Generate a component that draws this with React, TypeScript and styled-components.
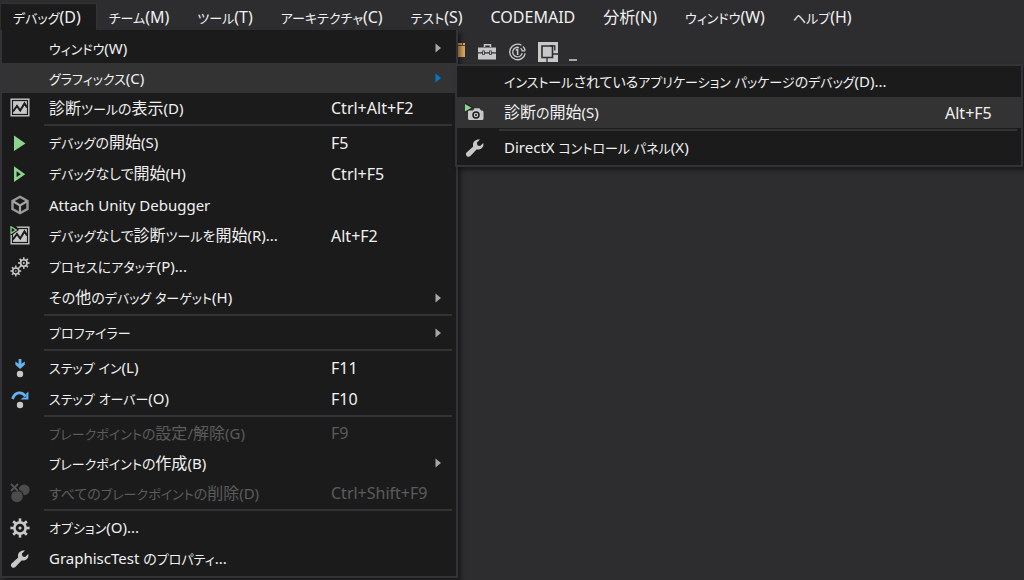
import React from "react";
import styled, { createGlobalStyle, css } from "styled-components";

const color = {
  shell: "#2d2d30",
  menu: "#1b1b1c",
  line: "#333337",
  hover: "#333334",
  text: "#f1f1f1",
  muted: "#5c5c5c",
  glyph: "#c8c8c8",
  green: "#8bd48b",
  blue: "#63b3f2",
  accent: "#007acc",
};

const GlobalStyle = createGlobalStyle`
  * { box-sizing: border-box; }
  html, body { margin: 0; background: ${color.shell}; }
  body, button {
    font-family: "Noto Sans", "Noto Sans CJK JP", sans-serif;
    font-size: 15px;
    line-height: 20px;
    color: ${color.text};
  }
  button {
    border: 0;
    margin: 0;
    padding: 0;
    background: none;
    text-align: left;
    white-space: nowrap;
  }
`;

const Shell = styled.div`
  position: relative;
  min-height: 100vh;
  overflow: hidden;
`;

const MenuBar = styled.nav`
  display: flex;
  height: 30px;
  padding: 4px 0 0 1px;
`;

const BarItem = styled.button<{ $open?: boolean }>`
  display: flex;
  align-items: center;
  padding: 0 15px 0 12px;
  font-size: 16px;
  border: solid transparent;
  border-width: 0 1px 0 0;
  ${(p) =>
    p.$open &&
    css`
      background: ${color.menu};
      border-color: ${color.line};
      box-shadow: 0 -1px 0 ${color.line};
    `}
`;

const Katakana = styled.span`
  font-size: 13px;
  font-feature-settings: "palt";
`;

const Hiragana = styled.span`
  font-size: 14px;
  font-feature-settings: "palt";
`;

const Kanji = styled.span`
  font-size: 16px;
`;

const Toolbar = styled.div`
  display: flex;
  align-items: center;
  gap: 10px;
  height: 44px;
  padding-left: 448px;
`;

const ToolButton = styled.button`
  display: flex;
`;

const Popup = styled.div`
  position: absolute;
  background: ${color.menu};
  border: 2px solid ${color.line};
  box-shadow: 3px 3px 4px rgba(0, 0, 0, 0.45);
`;

const DebugMenu = styled(Popup)`
  top: 30px;
  left: 0;
  width: 458px;
  border-top: 0;
  padding: 3px 0 2px;
`;

const GraphicsMenu = styled(Popup)`
  top: 64px;
  left: 455px;
  right: 1px;
  padding-bottom: 2px;
`;

const Group = styled.div<{ $row: number }>`
  display: grid;
  grid-auto-rows: ${(p) => p.$row}px;

  &:not(:first-child) {
    margin-top: 4px;
    position: relative;
  }
  &:not(:first-child)::before {
    content: "";
    position: absolute;
    top: -3px;
    left: 42px;
    right: 4px;
    height: 2px;
    background: ${color.line};
  }
`;

const Row = styled.button<{ $active?: boolean }>`
  display: grid;
  grid-template-columns: 47px 1fr 104px 21px;
  align-items: center;
  background: ${(p) => (p.$active ? color.hover : "transparent")};
  &:disabled {
    color: ${color.muted};
  }
`;

const Label = styled.span`
  line-height: 20px;
`;

const IconSlot = styled.span`
  display: flex;
  padding-left: 8px;
`;

const Shortcut = styled.span<{ $end?: boolean }>`
  font-size: 16px;
  padding-left: ${(p) => (p.$end ? 49 : 0)}px;
`;

const Svg = ({ children }: { children: React.ReactNode }) => (
  <svg width="20" height="20" viewBox="0 0 20 20" fill="none" aria-hidden="true">
    {children}
  </svg>
);

const Arrow = ({ active }: { active?: boolean }) => (
  <svg width="7" height="10" viewBox="0 0 7 10" aria-hidden="true">
    <path d="M0.5 0.5 6 5 0.5 9.5Z" fill={active ? color.accent : "#a8a8a8"} />
  </svg>
);

const Chart = () => (
  <>
    <rect x=".5" y=".5" width="19" height="18" fill={color.glyph} />
    <rect x="2.5" y="2.5" width="15" height="14" stroke={color.menu} strokeWidth="1.2" />
    <path d="M3 13.5 7 8 10.2 12.5 14.5 5.5 17 9.5" stroke={color.menu} strokeWidth="2" />
  </>
);

const ChartIcon = () => (
  <Svg>
    <Chart />
  </Svg>
);

const ChartPlayIcon = () => (
  <Svg>
    <Chart />
    <path d="M0 0H6L9 4 2 9H0Z" fill={color.menu} />
    <path d="M1 .8 6.2 4 1 7.3Z" stroke={color.green} strokeWidth="1.3" />
  </Svg>
);

const PlayIcon = () => (
  <Svg>
    <path d="M4 2.5 15.5 10.5 4 18Z" fill={color.green} />
  </Svg>
);

const PlayOutlineIcon = () => (
  <Svg>
    <path d="M5.3 4.8 13 10.2 5.3 15.6Z" stroke={color.green} strokeWidth="2.6" />
  </Svg>
);

const CubeIcon = () => (
  <Svg>
    <path d="M10 1.8 17.5 6V14L10 18.2 2.5 14V6Z" stroke="#999" strokeWidth="2.4" />
    <path d="M3 6.3 10 10.5 17 6.3M10 10.5V17.5" stroke="#a5a5a5" strokeWidth="2.2" />
  </Svg>
);

const teeth = [0, 45, 90, 135, 180, 225, 270, 315];

const Cog = ({ x, y, r, w, tooth }: { x: number; y: number; r: number; w: number; tooth: number }) => (
  <g stroke={color.glyph}>
    <circle cx={x} cy={y} r={r} strokeWidth={w} />
    {teeth.map((a) => (
      <path
        key={a}
        d={`M${x} ${y - r}V${y - r - tooth}`}
        strokeWidth={w}
        transform={`rotate(${a} ${x} ${y})`}
      />
    ))}
  </g>
);

const GearsIcon = () => (
  <Svg>
    <Cog x={13.8} y={6} r={3.2} w={1.6} tooth={2.6} />
    <Cog x={5.8} y={14} r={3} w={1.5} tooth={2.4} />
    <circle cx="13.8" cy="6" r="1" fill={color.glyph} />
    <circle cx="5.8" cy="14" r=".8" fill={color.glyph} />
  </Svg>
);

const GearIcon = () => (
  <Svg>
    <Cog x={10} y={10} r={5.6} w={2.6} tooth={4} />
    <circle cx="10" cy="10" r="1.6" fill={color.glyph} />
  </Svg>
);

const StepIntoIcon = () => (
  <Svg>
    <path d="M8.6 1H11.4V5.8L14.8 3.6V6.8L10.1 11 5.4 6.8V3.6L8.6 5.8Z" fill={color.blue} />
    <circle cx="10" cy="16" r="3.2" fill={color.glyph} />
  </Svg>
);

const StepOverIcon = () => (
  <Svg>
    <path d="M2.6 10C5 2.5 12 2.2 15.6 7.5" stroke={color.blue} strokeWidth="2.8" />
    <path d="M18.4 2.6V10.6H10.4L13 8.4H16.2V4.6Z" fill={color.blue} />
    <circle cx="10" cy="16" r="3.2" fill={color.glyph} />
  </Svg>
);

const DeleteBreakpointsIcon = () => (
  <Svg>
    <circle cx="14.2" cy="6.8" r="5.4" fill="#4c4c4c" />
    <circle cx="7" cy="13.4" r="6.8" fill={color.menu} />
    <circle cx="7" cy="13.4" r="5.8" fill="#4c4c4c" />
    <path d="M0 0H9V8.5H0Z" fill={color.menu} />
    <path d="M1 1 8 8M8 1 1 8" stroke="#555" strokeWidth="1.8" />
  </Svg>
);

const WrenchIcon = () => (
  <Svg>
    <path
      d="M18.2 5C19.4 8.8 16 12.4 11.6 11.4L5.4 18C3 20.4-.6 17 1.6 14.4L8.2 8.4C7 4.2 10.8.6 15 1.6L11.8 4.8 12.6 7.4 15.2 8Z"
      fill={color.glyph}
    />
  </Svg>
);

const CameraPlayIcon = () => (
  <Svg>
    <path d="M3 7.5H8L9.5 5.3H14.5L16 7.5H17Q18.5 7.5 18.5 9V15.5Q18.5 17 17 17H4.5Q3 17 3 15.5Z" fill={color.glyph} />
    <circle cx="11" cy="11.9" r="3" stroke={color.menu} strokeWidth="1.5" />
    <circle cx="11" cy="11.9" r="1" fill={color.menu} />
    <path d="M-1-1 8 4.8-1 10.5Z" fill={color.menu} />
    <path d="M0 1 6.6 4.8 0 8.6Z" fill={color.green} />
  </Svg>
);

const CabinetIcon = () => (
  <Svg>
    <path d="M8 1H17V15H8Z" fill="#d9a962" />
    <path d="M8 3.5H17" stroke="#5c4528" />
    <path d="M14.5 1V3.5" stroke="#5c4528" />
  </Svg>
);

const ToolboxIcon = () => (
  <Svg>
    <path d="M6.5 5V2.8H12.5V5" stroke={color.glyph} strokeWidth="1.5" />
    <path d="M0 5.5H18V10.2H0ZM0 11.5H18V17.5H0Z" fill={color.glyph} />
    <path d="M5.5 8.5V13M12.5 8.5V13" stroke={color.shell} strokeWidth="2.4" />
    <path d="M5.5 9.3V12.3M12.5 9.3V12.3" stroke={color.glyph} strokeWidth="1" />
  </Svg>
);

const TargetIcon = () => (
  <Svg>
    <path
      d="M13.4 3.2A7.8 7.8 0 1 0 17.2 11.4M15 4.4A7.8 7.8 0 0 1 17.2 8.6"
      stroke={color.glyph}
      strokeWidth="1.4"
    />
    <path
      d="M11 5.5A4.8 4.8 0 1 0 14.2 11.2M12.6 6.2A4.8 4.8 0 0 1 14.2 8.8H17.2"
      stroke={color.glyph}
      strokeWidth="1.3"
    />
    <path d="M7.8 8.4 9.6 7.4V13" stroke={color.glyph} strokeWidth="1.6" />
  </Svg>
);

const FrameIcon = () => (
  <Svg>
    <path d="M0 0H20V20H0Z" fill={color.glyph} />
    <path d="M4 4H14.5V15.5H4Z" stroke={color.shell} strokeWidth="1.6" />
    <path d="M12 3.8H16.8V8.4M9 15.5V20M14.5 12H20" stroke={color.shell} strokeWidth="1.3" />
  </Svg>
);

const OverflowIcon = () => (
  <Svg>
    <path d="M1 18H9" stroke={color.glyph} strokeWidth="1.6" />
  </Svg>
);

const scripts = /([\u3040-\u309f]+|[\u30a0-\u30ff]+|[\u4e00-\u9fff]+)/;

/** Sets each run of a caption in the size of its script. */
const Caption = ({ text }: { text: string }) => (
  <Label>
    {text.split(scripts).map((run, i) => {
      if (i % 2 === 0) return run;
      if (run < "\u30a0") return <Hiragana key={i}>{run}</Hiragana>;
      if (run < "\u3100") return <Katakana key={i}>{run}</Katakana>;
      return <Kanji key={i}>{run}</Kanji>;
    })}
  </Label>
);

type Item = {
  text: string;
  keys?: string;
  icon?: React.ReactNode;
  sub?: boolean;
  active?: boolean;
  disabled?: boolean;
};

const bar = [
  "デバッグ(D)",
  "チーム(M)",
  "ツール(T)",
  "アーキテクチャ(C)",
  "テスト(S)",
  "CODEMAID",
  "分析(N)",
  "ウィンドウ(W)",
  "ヘルプ(H)",
];

const debugGroups: Item[][] = [
  [
    { text: "ウィンドウ(W)", sub: true },
    { text: "グラフィックス(C)", sub: true, active: true },
    { text: "診断ツールの表示(D)", keys: "Ctrl+Alt+F2", icon: <ChartIcon /> },
  ],
  [
    { text: "デバッグの開始(S)", keys: "F5", icon: <PlayIcon /> },
    { text: "デバッグなしで開始(H)", keys: "Ctrl+F5", icon: <PlayOutlineIcon /> },
    { text: "Attach Unity Debugger", icon: <CubeIcon /> },
    { text: "デバッグなしで診断ツールを開始(R)...", keys: "Alt+F2", icon: <ChartPlayIcon /> },
    { text: "プロセスにアタッチ(P)...", icon: <GearsIcon /> },
    { text: "その他のデバッグ ターゲット(H)", sub: true },
  ],
  [{ text: "プロファイラー", sub: true }],
  [
    { text: "ステップ イン(L)", keys: "F11", icon: <StepIntoIcon /> },
    { text: "ステップ オーバー(O)", keys: "F10", icon: <StepOverIcon /> },
  ],
  [
    { text: "ブレークポイントの設定/解除(G)", keys: "F9", disabled: true },
    { text: "ブレークポイントの作成(B)", sub: true },
    { text: "すべてのブレークポイントの削除(D)", keys: "Ctrl+Shift+F9", icon: <DeleteBreakpointsIcon />, disabled: true },
  ],
  [
    { text: "オプション(O)...", icon: <GearIcon /> },
    { text: "GraphiscTest のプロパティ...", icon: <WrenchIcon /> },
  ],
];

const graphicsGroups: Item[][] = [
  [
    { text: "インストールされているアプリケーション パッケージのデバッグ(D)..." },
    { text: "診断の開始(S)", keys: "Alt+F5", icon: <CameraPlayIcon />, active: true },
  ],
  [{ text: "DirectX コントロール パネル(X)", icon: <WrenchIcon /> }],
];

const MenuRow = ({ item, endKeys }: { item: Item; endKeys?: boolean }) => (
  <Row type="button" role="menuitem" $active={item.active} disabled={item.disabled} aria-haspopup={item.sub ? "menu" : undefined}>
    <IconSlot>{item.icon}</IconSlot>
    <Caption text={item.text} />
    <Shortcut $end={endKeys}>{item.keys}</Shortcut>
    {item.sub ? <Arrow active={item.active} /> : <span />}
  </Row>
);

/** The window and breakpoint groups are set slightly tighter. */
const rowHeight = (group: number) => (group === 0 || group === 4 ? 30 : 31);

export default function App() {
  return (
    <Shell>
      <GlobalStyle />
      <MenuBar>
        {bar.map((text, i) => (
          <BarItem key={text} type="button" $open={i === 0}>
            <Caption text={text} />
          </BarItem>
        ))}
      </MenuBar>
      <Toolbar>
        <ToolButton type="button" aria-label="ファイル"><CabinetIcon /></ToolButton>
        <ToolButton type="button" aria-label="ツールボックス"><ToolboxIcon /></ToolButton>
        <ToolButton type="button" aria-label="ターゲット"><TargetIcon /></ToolButton>
        <ToolButton type="button" aria-label="フレーム"><FrameIcon /></ToolButton>
        <ToolButton type="button" aria-label="その他"><OverflowIcon /></ToolButton>
      </Toolbar>
      <DebugMenu role="menu" aria-label="デバッグ">
        {debugGroups.map((group, i) => (
          <Group key={i} $row={rowHeight(i)}>
            {group.map((item) => (
              <MenuRow key={item.text} item={item} />
            ))}
          </Group>
        ))}
      </DebugMenu>
      <GraphicsMenu role="menu" aria-label="グラフィックス">
        {graphicsGroups.map((group, i) => (
          <Group key={i} $row={31}>
            {group.map((item) => (
              <MenuRow key={item.text} item={item} endKeys />
            ))}
          </Group>
        ))}
      </GraphicsMenu>
    </Shell>
  );
}
